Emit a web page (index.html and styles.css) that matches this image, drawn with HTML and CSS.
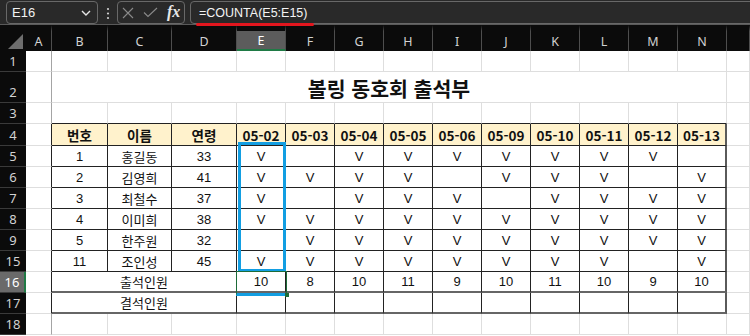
FILE: index.html
```html
<!DOCTYPE html>
<html lang="ko">
<head>
<meta charset="utf-8">
<title>볼링 동호회 출석부</title>
<link rel="stylesheet" href="styles.css">
</head>
<body>
<div class="topbar">
  <div class="namebox">
    <span class="nb-text">E16</span>
    <svg class="chev" width="10" height="6" viewBox="0 0 10 6"><path d="M1 1 L5 5 L9 1" fill="none" stroke="#e6e6e6" stroke-width="1.4"/></svg>
  </div>
  <svg class="dots" width="4" height="14" viewBox="0 0 4 14"><circle cx="2" cy="2" r="1.1" fill="#cfcfcf"/><circle cx="2" cy="6.5" r="1.1" fill="#cfcfcf"/><circle cx="2" cy="11" r="1.1" fill="#cfcfcf"/></svg>
  <div class="fxbox">
    <svg class="ico-x" width="12" height="12" viewBox="0 0 12 12"><path d="M1 1 L11 11 M11 1 L1 11" stroke="#8a8a8a" stroke-width="1.1" fill="none"/></svg>
    <svg class="ico-ok" width="15" height="11" viewBox="0 0 15 11"><path d="M1 5.5 L5 9.5 L14 1" stroke="#8a8a8a" stroke-width="1.1" fill="none"/></svg>
    <span class="fx">fx</span>
  </div>
  <div class="formula"><span class="ftext">=COUNTA(E5:E15)</span></div>
</div>

<div class="sheet">
  <!-- column headers -->
  <div class="corner"><span class="tri"></span></div>
  <div class="ch">A</div><div class="ch">B</div><div class="ch">C</div><div class="ch">D</div>
  <div class="ch sel">E</div><div class="ch">F</div><div class="ch">G</div><div class="ch">H</div>
  <div class="ch">I</div><div class="ch">J</div><div class="ch">K</div><div class="ch">L</div>
  <div class="ch">M</div><div class="ch">N</div><div class="ch"></div>

  <!-- row 1 -->
  <div class="rh">1</div><div class="ga"></div>
  <div class="g"></div><div class="g"></div><div class="g"></div><div class="g"></div><div class="g"></div><div class="g"></div><div class="g"></div>
  <div class="g"></div><div class="g"></div><div class="g"></div><div class="g"></div><div class="g"></div><div class="g"></div><div class="g"></div>

  <!-- row 2 -->
  <div class="rh">2</div><div class="ga"></div>
  <div class="title">볼링 동호회 출석부</div>
  <div class="g"></div>

  <!-- row 3 -->
  <div class="rh">3</div><div class="ga"></div>
  <div class="g gb"></div><div class="g gb"></div><div class="g gb"></div><div class="g gb"></div><div class="g gb"></div><div class="g gb"></div><div class="g gb"></div>
  <div class="g gb"></div><div class="g gb"></div><div class="g gb"></div><div class="g gb"></div><div class="g gb"></div><div class="g gb"></div><div class="g"></div>

  <!-- row 4 -->
  <div class="rh">4</div><div class="gat"></div>
  <div class="th">번호</div><div class="th">이름</div><div class="th">연령</div>
  <div class="th">05-02</div><div class="th">05-03</div><div class="th">05-04</div><div class="th">05-05</div><div class="th">05-06</div>
  <div class="th">05-09</div><div class="th">05-10</div><div class="th">05-11</div><div class="th">05-12</div><div class="th last">05-13</div>
  <div class="g"></div>

  <!-- row 5 -->
  <div class="rh">5</div><div class="gat"></div>
  <div class="td">1</div><div class="td">홍길동</div><div class="td">33</div>
  <div class="td anchor">V<div class="range"></div></div><div class="td"></div><div class="td">V</div><div class="td">V</div><div class="td">V</div>
  <div class="td">V</div><div class="td">V</div><div class="td">V</div><div class="td">V</div><div class="td last"></div>
  <div class="g"></div>

  <!-- row 6 -->
  <div class="rh">6</div><div class="gat"></div>
  <div class="td">2</div><div class="td">김영희</div><div class="td">41</div>
  <div class="td">V</div><div class="td">V</div><div class="td">V</div><div class="td">V</div><div class="td"></div>
  <div class="td">V</div><div class="td">V</div><div class="td">V</div><div class="td"></div><div class="td last">V</div>
  <div class="g"></div>

  <!-- row 7 -->
  <div class="rh">7</div><div class="gat"></div>
  <div class="td">3</div><div class="td">최철수</div><div class="td">37</div>
  <div class="td">V</div><div class="td"></div><div class="td">V</div><div class="td">V</div><div class="td">V</div>
  <div class="td"></div><div class="td">V</div><div class="td">V</div><div class="td">V</div><div class="td last">V</div>
  <div class="g"></div>

  <!-- row 8 -->
  <div class="rh">8</div><div class="gat"></div>
  <div class="td">4</div><div class="td">이미희</div><div class="td">38</div>
  <div class="td">V</div><div class="td">V</div><div class="td">V</div><div class="td">V</div><div class="td">V</div>
  <div class="td">V</div><div class="td">V</div><div class="td">V</div><div class="td">V</div><div class="td last">V</div>
  <div class="g"></div>

  <!-- row 9 -->
  <div class="rh">9</div><div class="gat"></div>
  <div class="td">5</div><div class="td">한주원</div><div class="td">32</div>
  <div class="td"></div><div class="td">V</div><div class="td">V</div><div class="td">V</div><div class="td">V</div>
  <div class="td">V</div><div class="td">V</div><div class="td">V</div><div class="td">V</div><div class="td last">V</div>
  <div class="g"></div>

  <!-- row 15 -->
  <div class="rh">15</div><div class="gat"></div>
  <div class="td">11</div><div class="td">조인성</div><div class="td">45</div>
  <div class="td">V</div><div class="td">V</div><div class="td">V</div><div class="td">V</div><div class="td">V</div>
  <div class="td">V</div><div class="td">V</div><div class="td">V</div><div class="td"></div><div class="td last">V</div>
  <div class="g"></div>

  <!-- row 16 -->
  <div class="rh sel">16</div><div class="gat"></div>
  <div class="td m3 sum">출석인원</div>
  <div class="td sum anchor">10<div class="active"></div></div><div class="td sum">8</div><div class="td sum">10</div><div class="td sum">11</div><div class="td sum">9</div>
  <div class="td sum">10</div><div class="td sum">11</div><div class="td sum">10</div><div class="td sum">9</div><div class="td sum last">10</div>
  <div class="g"></div>

  <!-- row 17 -->
  <div class="rh">17</div><div class="gat"></div>
  <div class="td m3 sum">결석인원</div>
  <div class="td sum"></div><div class="td sum"></div><div class="td sum"></div><div class="td sum"></div><div class="td sum"></div>
  <div class="td sum"></div><div class="td sum"></div><div class="td sum"></div><div class="td sum"></div><div class="td sum last"></div>
  <div class="g"></div>

  <!-- row 18 -->
  <div class="rh">18</div><div class="ga"></div>
  <div class="g"></div><div class="g"></div><div class="g"></div><div class="g"></div><div class="g"></div><div class="g"></div><div class="g"></div>
  <div class="g"></div><div class="g"></div><div class="g"></div><div class="g"></div><div class="g"></div><div class="g"></div><div class="g"></div>
</div>
</body>
</html>
```

FILE: styles.css
```css
* { box-sizing: border-box; }

html, body {
  margin: 0;
  padding: 0;
  background: #ffffff;
}

body {
  width: 750px;
  height: 336px;
  overflow: hidden;
  font-family: "Liberation Sans", "Noto Sans CJK KR", sans-serif;
}

/* ---------- formula bar ---------- */
.topbar {
  height: 25px;
  background: #292929;
  border-bottom: 1px solid #5a5a5a;
  display: flex;
  align-items: flex-start;
  padding: 1px 0 0 6px;
}

.namebox {
  width: 92px;
  height: 23px;
  border: 1px solid #686868;
  border-radius: 4px;
  display: flex;
  align-items: center;
  padding: 0 6px 0 5px;
  color: #f2f2f2;
  font-size: 13px;
}

.nb-text { flex: 1; }

.chev { display: block; }

.dots {
  margin: 6px 7px 0 8px;
  display: block;
}

.fxbox {
  width: 68px;
  height: 23px;
  border: 1px solid #686868;
  border-radius: 4px;
  display: flex;
  align-items: center;
  padding: 0 0 0 4px;
}

.ico-x { display: block; margin-right: 9px; }
.ico-ok { display: block; margin-right: 9px; }

.fx {
  font-family: "Liberation Serif", serif;
  font-style: italic;
  font-weight: bold;
  font-size: 16px;
  color: #e8e8e8;
  line-height: 1;
  margin-top: -2px;
}

.formula {
  flex: 1;
  margin-left: 5px;
  margin-right: -12px;
  height: 23px;
  border: 1px solid #686868;
  border-radius: 4px;
  display: flex;
  align-items: center;
  padding-left: 7px;
  color: #f4f4f4;
  font-size: 12.5px;
}

.ftext {
  position: relative;
  z-index: 5;
  padding: 0 1px;
}

.ftext::after {
  content: "";
  position: absolute;
  left: -2px;
  right: -6px;
  bottom: -6px;
  height: 3px;
  border-radius: 2px;
  background: #e3161e;
}

/* ---------- sheet grid ---------- */
.sheet {
  display: grid;
  grid-template-columns: 26px 26px 56px 64px 65px repeat(10, 49px) 23px;
  grid-template-rows: 26px 21px 31px 21px 22px repeat(9, 21px);
  background: #ffffff;
}

.corner {
  background: #0b0b0b;
  position: relative;
}

.tri {
  position: absolute;
  right: 3px;
  bottom: 2px;
  width: 0;
  height: 0;
  border-left: 15px solid transparent;
  border-bottom: 15px solid #6e6e6e;
}

.ch {
  background: #0b0b0b;
  border-top: 6px solid #0b0b0b;
  color: #d2d2d2;
  font-family: "Noto Sans", sans-serif;
  font-size: 12.5px;
  display: flex;
  align-items: center;
  justify-content: center;
  border-right: 1px solid #4e4e4e;
}

.ch.sel {
  background: #5c5c5c;
  color: #ffffff;
  border-bottom: 2px solid #1f7a45;
}

.rh {
  background: #0b0b0b;
  color: #d2d2d2;
  font-family: "Noto Sans", sans-serif;
  font-size: 13px;
  display: flex;
  align-items: flex-end;
  justify-content: center;
  padding-bottom: 1px;
  border-bottom: 1px solid #3a3a3a;
}

.rh.sel {
  background: #6a6a6a;
  color: #ffffff;
  border-right: 2px solid #1f7a45;
}

.g {
  border-right: 1px solid #dedede;
  border-bottom: 1px solid #dedede;
}

.ga {
  border-right: 1px solid #a4a4a4;
  border-bottom: 1px solid #dedede;
}

.gat {
  border-right: 1px solid #222222;
  border-bottom: 1px solid #dedede;
}

.g.gb {
  border-bottom: 1px solid #222222;
}

.title {
  grid-column: span 13;
  border-right: 1px solid #dedede;
  border-bottom: 1px solid #dedede;
  display: flex;
  align-items: center;
  justify-content: center;
  font-family: "Noto Sans CJK KR", sans-serif;
  font-weight: bold;
  font-size: 20.5px;
  color: #111111;
  padding-top: 1px;
}

.th {
  background: #fff2cc;
  border-right: 1px solid #222222;
  border-bottom: 1px solid #222222;
  display: flex;
  align-items: center;
  justify-content: center;
  font-family: "Noto Sans CJK KR", sans-serif;
  font-weight: bold;
  font-size: 13.5px;
  color: #111111;
}

.td {
  border-right: 1px solid #222222;
  border-bottom: 1px solid #222222;
  display: flex;
  align-items: center;
  justify-content: center;
  font-size: 13px;
  color: #111111;
}

.td.m3 {
  grid-column: span 3;
  font-family: "Noto Sans CJK KR", sans-serif;
}

.td.sum {
  border-bottom: 2px solid #666666;
}

.th.last, .td.last {
  border-right: 2px solid #5a5a5a;
}

.anchor {
  position: relative;
}

.range {
  position: absolute;
  left: 1px;
  top: -4px;
  width: 48px;
  height: 130px;
  border: 3px solid #129ee2;
  z-index: 2;
}

.active {
  position: absolute;
  left: -1px;
  top: -1px;
  width: 51px;
  height: 25px;
  border: 1px solid #1d6b38;
  border-bottom: 3px solid #129ee2;
  z-index: 3;
}

.active::after {
  content: "";
  position: absolute;
  right: -3px;
  bottom: -4px;
  width: 4px;
  height: 4px;
  background: #1d6b38;
}
```
